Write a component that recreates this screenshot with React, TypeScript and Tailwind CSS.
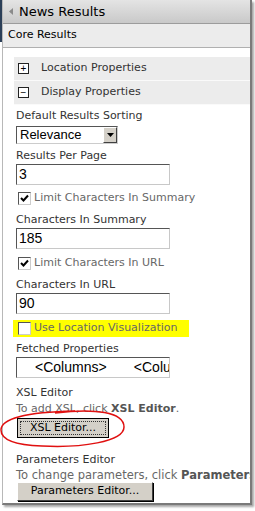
import React from "react";

const verdana = { fontFamily: '"DejaVu Sans", Verdana, sans-serif' };
const arial = { fontFamily: '"Liberation Sans", Arial, sans-serif' };

function Label({ children }: { children: React.ReactNode }) {
  return (
    <div className="h-[16px] leading-[16px] text-[11px] text-[#333]" style={verdana}>
      {children}
    </div>
  );
}

function TextBox({ value }: { value: string }) {
  return (
    <div
      className="w-[154px] h-[21px] bg-white border border-t-[#555] border-l-[#555] border-r-[#c8c8c8] border-b-[#c8c8c8] pl-[2px] leading-[19px] text-[14px] text-black"
      style={arial}
    >
      {value}
    </div>
  );
}

function Check({ checked, label }: { checked: boolean; label: string }) {
  return (
    <div className="flex items-center gap-[3px] h-[18px] pl-[2px]">
      <div className="w-[13px] h-[13px] bg-white border border-t-[#555] border-l-[#555] border-r-[#ccc] border-b-[#ccc] flex items-center justify-center">
        {checked && (
          <svg width="9" height="9" viewBox="0 0 9 9">
            <path d="M1 4 L3.5 6.5 L8 1.5" stroke="#000" strokeWidth="2" fill="none" />
          </svg>
        )}
      </div>
      <span className="text-[11px] text-[#676767]" style={verdana}>
        {label}
      </span>
    </div>
  );
}

function SectionHead({ sign, label }: { sign: string; label: string }) {
  return (
    <div className="h-[24px] bg-[#ececec] flex items-center border-b border-[#fafafa]">
      <div className="ml-[4px] w-[11px] h-[11px] border border-[#222] bg-white flex items-center justify-center text-[10px] leading-none text-black" style={arial}>
        {sign}
      </div>
      <span className="ml-[12px] text-[11px] text-[#333]" style={verdana}>
        {label}
      </span>
    </div>
  );
}

export default function App() {
  return (
    <div className="relative w-[255px] h-[511px] bg-white overflow-hidden">
      <div className="absolute left-0 top-0 w-[2px] h-[42px] bg-[#2b3f58]" />
      <div className="ml-[2px] w-[250px] h-[505px] bg-white border-l border-[#b8b8b8] border-r-[2px] border-r-[#7a7a7a] border-b-[2px] border-b-[#7a7a7a] shadow-[2px_2px_2px_rgba(0,0,0,0.35)] overflow-hidden">
        <div className="h-[24px] bg-gradient-to-b from-[#e4e4e4] to-[#c9c9c9] border-b border-[#9c9c9c] flex items-center">
          <svg className="ml-[6px]" width="4" height="7" viewBox="0 0 4 7">
            <path d="M4 0 V7 L0 3.5 Z" fill="#8a8a8a" />
          </svg>
          <span className="ml-[6px] text-[13px] text-black" style={verdana}>
            News Results
          </span>
        </div>
        <div className="h-[24px] bg-[#ececec] border-b border-[#b0b0b0] flex items-center pl-[5px] text-[11px] text-black" style={verdana}>
          Core Results
        </div>
        <div className="pl-[11px] pt-[9px]">
          <SectionHead sign="+" label="Location Properties" />
          <SectionHead sign="−" label="Display Properties" />
          <div className="pl-[2px] pt-[3px]">
            <Label>Default Results Sorting</Label>
            <div className="mt-[2px] w-[102px] h-[18px] flex border border-t-[#555] border-l-[#555] border-r-[#ccc] border-b-[#ccc] bg-white">
              <span className="flex-1 pl-[3px] text-[13px] leading-[16px] text-black" style={arial}>
                Relevance
              </span>
              <div className="w-[14px] h-[16px] bg-[#d4d0c8] border border-t-white border-l-white border-r-[#404040] border-b-[#404040] flex items-center justify-center">
                <svg width="7" height="4" viewBox="0 0 7 4">
                  <path d="M0 0 H7 L3.5 4 Z" fill="#000" />
                </svg>
              </div>
            </div>
            <div className="h-[4px]" />
            <Label>Results Per Page</Label>
            <TextBox value="3" />
            <div className="h-[4px]" />
            <Check checked label="Limit Characters In Summary" />
            <div className="h-[5px]" />
            <Label>Characters In Summary</Label>
            <TextBox value="185" />
            <div className="h-[5px]" />
            <Check checked label="Limit Characters In URL" />
            <div className="h-[5px]" />
            <Label>Characters In URL</Label>
            <TextBox value="90" />
            <div className="h-[6px]" />
            <div className="-ml-[3px] w-[176px] h-[17px] bg-[#ffff00] flex items-center pl-[3px]">
              <Check checked={false} label="Use Location Visualization" />
            </div>
            <div className="h-[4px]" />
            <Label>Fetched Properties</Label>
            <div className="w-[154px] h-[21px] border border-t-[#555] border-l-[#555] border-r-[#c8c8c8] border-b-[#c8c8c8] overflow-hidden whitespace-pre text-[14px] leading-[19px] text-black pl-[18px]" style={arial}>
              {"<Columns>       <Columns>"}
            </div>
            <div className="h-[7px]" />
            <Label>XSL Editor</Label>
            <div className="whitespace-nowrap text-[11px] h-[15px] leading-[15px] text-[#676767]" style={verdana}>
              To add XSL, click <b className="text-[#555]">XSL Editor</b>.
            </div>
            <div className="mt-[2px] ml-[1px] w-[92px] h-[20px] bg-[#d4d0c8] border border-black p-[2px]">
              <div className="h-full border border-dotted border-[#333] flex items-center justify-center text-[11px] text-black" style={verdana}>
                XSL Editor...
              </div>
            </div>
            <div className="h-[14px]" />
            <Label>Parameters Editor</Label>
            <div className="whitespace-nowrap text-[11.5px] h-[14px] leading-[14px] text-[#676767]" style={verdana}>
              To change parameters, click <b className="text-[#555]">Parameters Editor</b>.
            </div>
            <div className="ml-[1px] w-[136px] h-[19px] bg-[#d4d0c8] border border-t-white border-l-white border-r-[#404040] border-b-[#404040] shadow-[1px_1px_0_#000] flex items-center justify-center text-[11px] text-black" style={verdana}>
              Parameters Editor...
            </div>
          </div>
        </div>
      </div>
      <svg className="absolute left-0 top-[404px]" width="130" height="46" viewBox="0 0 130 46">
        <path
          d="M55 9 C 95 4, 124 8, 124 23 C 124 38, 80 44, 42 42 C 14 41, 1 35, 1 26 C 1 15, 25 8, 75 7"
          stroke="#e01010"
          strokeWidth="1.5"
          fill="none"
        />
      </svg>
    </div>
  );
}
